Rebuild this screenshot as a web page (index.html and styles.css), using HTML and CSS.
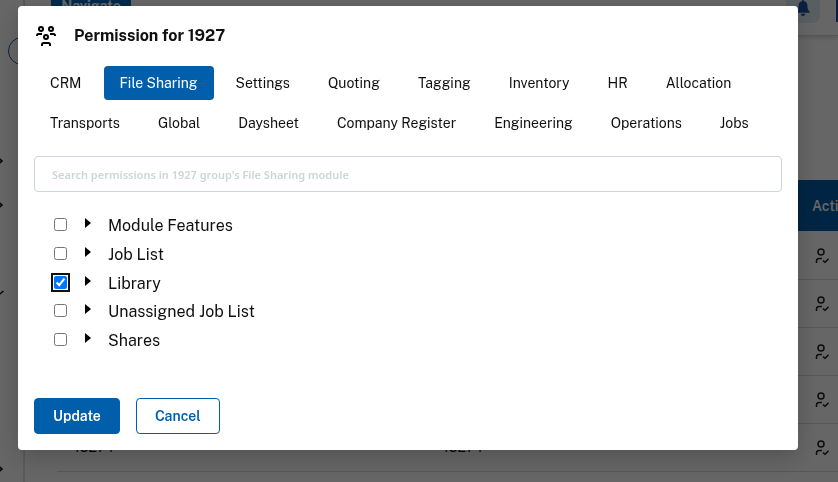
FILE: index.html
```html
<!DOCTYPE html>
<html lang="en">
<head>
<meta charset="utf-8">
<title>Group permissions</title>
<link rel="stylesheet" href="styles.css">
</head>
<body>
<svg class="sprite" aria-hidden="true">
  <symbol id="user-check" viewBox="0 0 15 16">
    <g fill="none" stroke="currentColor" stroke-width="1.5">
      <circle cx="6" cy="4" r="3"/>
      <path d="M1.500 15v-2q0-2.600 2.600-2.600h2.900M8 12.600l2 1.700 3.600-3.600"/>
    </g>
  </symbol>
  <symbol id="chevron-right" viewBox="0 0 12 12"><path d="M5 1.500l5 4.500-5 4.500" fill="none" stroke="currentColor" stroke-width="1.500"/></symbol>
  <symbol id="chevron-down" viewBox="0 0 12 12"><path d="M1 4l5 4.500L11.500 4" fill="none" stroke="currentColor" stroke-width="1.300"/></symbol>
</svg>

<div class="page">
  <aside class="sidebar">
    <button class="collapse" aria-label="Toggle sidebar"></button>
    <svg class="chevron chevron-first"><use href="#chevron-right"/></svg>
    <svg class="chevron"><use href="#chevron-right"/></svg>
    <svg class="chevron chevron-open"><use href="#chevron-down"/></svg>
    <svg class="chevron chevron-last"><use href="#chevron-right"/></svg>
  </aside>
  <div class="content">
    <header class="topbar">
      <button class="navigate">Navigate</button>
      <button class="bell" aria-label="Notifications">
        <svg viewBox="0 0 16 18" width="14" height="16"><path d="M8 0a1.200 1.200 0 0 1 1.200 1.300A5 5 0 0 1 13 6.200c0 4 1 5.500 2.500 7V14.500H.5V13.200C2 11.700 3 10.200 3 6.200a5 5 0 0 1 3.800-4.900A1.200 1.200 0 0 1 8 0zM5.500 15.500h5a2.500 2.500 0 0 1-5 0z" fill="currentColor"/></svg>
      </button>
      <span class="account"></span>
    </header>
    <main class="table-wrap">
      <table class="groups">
        <colgroup><col class="col-data"><col class="col-data"><col></colgroup>
        <thead><tr><th></th><th></th><th>Actions</th></tr></thead>
        <tbody>
          <tr><td></td><td></td><td><svg class="action"><use href="#user-check"/></svg></td></tr>
          <tr><td></td><td></td><td><svg class="action"><use href="#user-check"/></svg></td></tr>
          <tr><td></td><td></td><td><svg class="action"><use href="#user-check"/></svg></td></tr>
          <tr><td></td><td></td><td><svg class="action"><use href="#user-check"/></svg></td></tr>
          <tr><td>13274</td><td>13274</td><td><svg class="action"><use href="#user-check"/></svg></td></tr>
        </tbody>
      </table>
    </main>
  </div>
</div>

<div class="overlay">
  <section class="modal" role="dialog" aria-modal="true" aria-labelledby="modal-title">
    <header class="modal-head">
      <svg class="people" viewBox="0 0 20 20" aria-hidden="true">
        <g fill="none" stroke="currentColor" stroke-width="2">
          <circle cx="5" cy="3" r="2"/>
          <circle cx="15" cy="3" r="2"/>
          <circle cx="10" cy="11" r="2"/>
          <path d="M1 10V9.500q0-1.500 1.500-1.500H6M19 10V9.500q0-1.500-1.500-1.500H14M6 20v-1.500q0-1.500 1.500-1.500h5q1.500 0 1.500 1.500V20"/>
        </g>
      </svg>
      <h1 class="title" id="modal-title">Permission for 1927</h1>
    </header>
    <nav class="tabs" aria-label="Modules">
      <button class="tab">CRM</button>
      <button class="tab active">File Sharing</button>
      <button class="tab">Settings</button>
      <button class="tab">Quoting</button>
      <button class="tab">Tagging</button>
      <button class="tab">Inventory</button>
      <button class="tab">HR</button>
      <button class="tab">Allocation</button>
      <button class="tab">Transports</button>
      <button class="tab">Global</button>
      <button class="tab">Daysheet</button>
      <button class="tab">Company Register</button>
      <button class="tab">Engineering</button>
      <button class="tab">Operations</button>
      <button class="tab">Jobs</button>
    </nav>
    <input class="search" type="text" aria-label="Search permissions" placeholder="Search permissions in 1927 group's File Sharing module">
    <ul class="tree">
      <li class="node"><input type="checkbox" id="p1"><span class="caret"></span><label for="p1">Module Features</label></li>
      <li class="node"><input type="checkbox" id="p2"><span class="caret"></span><label for="p2">Job List</label></li>
      <li class="node"><input class="focused" type="checkbox" id="p3" checked><span class="caret"></span><label for="p3">Library</label></li>
      <li class="node"><input type="checkbox" id="p4"><span class="caret"></span><label for="p4">Unassigned Job List</label></li>
      <li class="node"><input type="checkbox" id="p5"><span class="caret"></span><label for="p5">Shares</label></li>
    </ul>
    <footer class="actions">
      <button class="btn primary">Update</button>
      <button class="btn outline">Cancel</button>
    </footer>
  </section>
</div>
</body>
</html>
```
FILE: styles.css
```css
* { box-sizing: border-box; }

body {
  margin: 0;
  overflow: hidden;
  background: #fff;
  color: #101010;
  font-family: "Public Sans", Inter, "Liberation Sans", sans-serif;
  font-size: 14px;
}

button { font-family: inherit; border: 0; cursor: pointer; white-space: nowrap; }

.sprite { position: absolute; width: 0; height: 0; }

/* Page behind the dialog */
.page { display: grid; grid-template-columns: 25px minmax(0, 1fr); height: 100vh; overflow: hidden; }
.sidebar { border-right: 2px solid #e2e2e2; padding-top: 37px; display: flex; flex-direction: column; align-items: flex-start; }
.collapse { width: 28px; height: 28px; flex: none; margin-left: 8px; border: 1px solid #005eab; border-radius: 50%; background: #fff; }
.chevron { width: 12px; height: 12px; flex: none; margin-left: -8px; margin-bottom: 32px; color: #000; }
.chevron-first { margin-top: 90px; }
.chevron-open { margin-top: 44px; }
.chevron-last { margin-top: 132px; }

.topbar { display: flex; align-items: flex-start; height: 36px; padding-left: 26px; border-bottom: 1px solid #d8d8d8; box-shadow: 0 2px 4px rgba(0, 0, 0, .15); }
.navigate { width: 80px; height: 20px; margin-top: -4px; padding: 0; background: #0067bd; color: #fff; font-weight: 700; font-size: 14px; line-height: 18px; }
.bell { display: grid; place-items: start center; width: 34px; height: 23px; margin-left: auto; margin-right: 16px; padding: 0; border-radius: 0 0 8px 8px; background: #dceaf5; color: #1e4fa0; }
.account { width: 2px; height: 22px; background: #1e4fa0; }

.table-wrap { padding: 144px 0 0 32px; overflow: hidden; }
.groups { width: 100%; table-layout: fixed; border-collapse: collapse; }
.col-data { width: 369px; }
.groups th { height: 51px; padding: 0 0 0 17px; background: #005eab; color: #fff; text-align: left; font-weight: 600; white-space: nowrap; }
.groups td { height: 48px; padding: 0 0 0 17px; border-bottom: 1px solid #d8d8d8; }
.action { display: block; width: 15px; height: 16px; margin: 2px 0 0 3px; color: #22222c; }

/* Dialog */
.overlay { position: fixed; inset: 0; padding: 6px 40px 32px 18px; background: rgba(0, 0, 0, .6); }
.modal { padding: 16px; border-radius: 4px; background: #fff; box-shadow: 0 8px 24px rgba(0, 0, 0, .2); }
.modal-head { display: flex; align-items: center; gap: 18px; height: 28px; padding-left: 2px; }
.people { width: 20px; height: 20px; color: #000; }
.title { margin: 0; font-size: 16px; font-weight: 700; line-height: 28px; }
.tabs { display: flex; flex-wrap: wrap; gap: 6px; margin-top: 16px; }
.tab { height: 34px; padding: 0 16px; border-radius: 4px; background: transparent; color: #101010; font-size: 14px; }
.tab.active { background: #005eab; color: #fff; }
.search { display: block; width: 100%; height: 36px; margin-top: 16px; padding: 0 17px; border: 1px solid #ced4da; border-radius: 4px; font: 600 11px "Noto Sans", sans-serif; }
.search::placeholder { color: #ced4da; opacity: 1; }
.tree { display: grid; grid-template-rows: 29px 29px 28px 29px 29px; list-style: none; margin: 19px 0 0; padding: 0 0 0 20px; font-size: 16px; }
.node { display: flex; align-items: center; }
.node input { width: 13px; height: 13px; margin: 0 0 2px; }
.node .focused { border-radius: 2px; box-shadow: 0 0 0 1px #fff, 0 0 0 3px #101010; }
.caret { margin: 0 17px 5px 18px; border: solid transparent; border-width: 5px 0 5px 6px; border-left-color: #000; }
.actions { display: flex; gap: 16px; margin-top: 43px; }
.btn { height: 36px; padding: 0 18px; border: 1px solid #005eab; border-radius: 4px; font-size: 14px; font-weight: 600; }
.primary { background: #005eab; color: #fff; }
.outline { background: #fff; color: #005eab; }
```
